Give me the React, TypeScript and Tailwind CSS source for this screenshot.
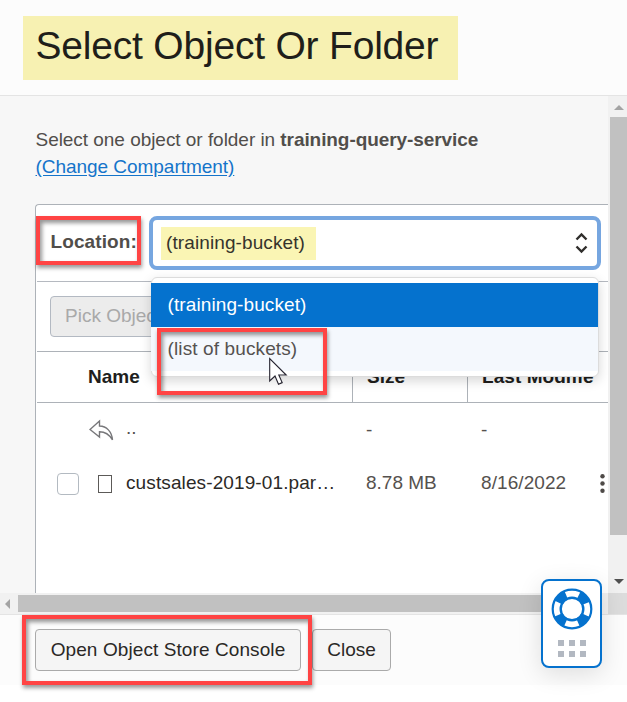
import React from "react";

function Callout({ className }: { className: string }) {
  return (
    <div
      className={`pointer-events-none absolute border-4 border-[#ff4444] ${className}`}
    >
      <div className="h-full w-full shadow-[inset_2px_3px_4px_rgba(0,0,0,0.42)]" />
    </div>
  );
}

function Header() {
  return (
    <header className="h-24 border-b border-[#e4e4e4] bg-[#fcfcfc] pl-[23px] pt-4">
      <h1 className="h-16 w-[435px] whitespace-nowrap bg-[#f7f1b2] pl-[12.5px] text-[39px] leading-[59px] tracking-[-0.2px] text-[#201e1a]">
        Select Object Or Folder
      </h1>
    </header>
  );
}

function LocationSelect() {
  return (
    <div className="relative ml-[11.5px] w-[452px]">
      <div className="flex h-[54px] items-center justify-between rounded-lg border-4 border-[#76a6e0] bg-white pl-[8.5px] pr-[9px]">
        <span className="h-[33px] w-[155px] bg-[#faf5b4] pl-[5px] leading-[32px] tracking-[0.1px] text-[#35332c]">
          (training-bucket)
        </span>
        <svg width="13" height="22" viewBox="0 0 13 22" fill="none" stroke="#302e2c" strokeWidth="2.4">
          <path d="M1.5 7.5 6.5 2.5 11.5 7.5M1.5 14.5 6.5 19.5 11.5 14.5" />
        </svg>
      </div>
      <div className="absolute left-[2.5px] top-[61px] z-10 w-[448px] rounded-md border border-[#dcdcdc] bg-white py-[5px] shadow-[0_4px_12px_rgba(0,0,0,0.16)]">
        <div className="-ml-px h-11 bg-[#0572ce] pl-[16.5px] leading-[43px] tracking-[0.1px] text-white">(training-bucket)</div>
        <div className="-ml-px h-11 bg-[#f4f8fd] pl-[16.5px] leading-[43px] tracking-[0.12px] text-[#555250]">(list of buckets)</div>
      </div>
    </div>
  );
}

function ObjectTable() {
  return (
    <div className="ml-px">
      <div className="grid h-[52px] grid-cols-[315px_115px_141px] border-y border-[#adb2b8] font-bold leading-[49px] text-[#201e1c]">
        <span className="pl-[51px]">Name</span>
        <span className="border-l border-[#adb2b8] pl-[14px]">Size</span>
        <span className="overflow-hidden whitespace-nowrap border-l border-[#adb2b8] pl-[14px] tracking-[0.06px]">Last Modifie</span>
      </div>
      <div className="grid h-[54px] grid-cols-[315px_115px_141px] items-center text-[#55514e]">
        <div className="flex items-center pl-[52px]">
          <svg width="25" height="23" viewBox="0 0 25 23" fill="none" stroke="#77777a" strokeWidth="1.4">
            <path d="M10.5 2 1 10.5 10.5 18V12.7C16.5 12.7 20 15 23.5 20.8 22.8 12.5 17.5 7.2 10.5 7Z" />
          </svg>
          <span className="mb-1 ml-[12px]">..</span>
        </div>
        <span className="pl-[14px]">-</span>
        <span className="pl-[14px]">-</span>
      </div>
      <div className="grid h-[54px] grid-cols-[315px_115px_141px] items-center text-[#55514e]">
        <div className="flex items-center pl-5">
          <span className="h-[22px] w-[22px] shrink-0 rounded border border-[#b3bac1]" />
          <span className="ml-[19px] h-[18px] w-[14px] shrink-0 border border-[#5c5a58]" />
          <span className="mb-[2px] ml-[14px] whitespace-nowrap tracking-[0.11px] text-[#2b2926]">
            custsales-2019-01.par…
          </span>
        </div>
        <span className="mb-[2px] pl-[14px]">8.78 MB</span>
        <div className="flex items-center justify-between pl-[14px] pr-[3px]">
          <span className="mb-[2px] tracking-[0.08px]">8/16/2022</span>
          <svg width="5" height="20" viewBox="0 0 5 20" fill="#4e4a47">
            <circle cx="2.5" cy="2.2" r="2.2" />
            <circle cx="2.5" cy="9.5" r="2.2" />
            <circle cx="2.5" cy="16.8" r="2.2" />
          </svg>
        </div>
      </div>
    </div>
  );
}

function Browser() {
  return (
    <section className="mt-6 h-[389px] rounded-tl border-l border-t border-[#adb2b8] bg-white">
      <div className="ml-px flex h-[77px] items-start border-b border-[#b5b9c0] pt-[11px]">
        <label className="w-[100px] pl-[13.5px] pt-[13px] font-bold leading-[26px] tracking-[0.1px] text-[#514e4a]">
          Location:
        </label>
        <LocationSelect />
      </div>
      <div className="flex h-[69px] items-start pl-[14px] pt-[14px]">
        <button className="h-[41px] w-40 rounded border border-[#b3b9c2] bg-[#ececec] pl-[14px] text-left text-[#a9a9a9]">
          Pick Objects
        </button>
      </div>
      <ObjectTable />
    </section>
  );
}

function VerticalScrollbar() {
  return (
    <div className="flex w-[19px] shrink-0 flex-col bg-[#f1f1f1] pl-[2px]">
      <div className="flex h-[21px] items-end justify-center pb-[7px]">
        <svg width="10" height="5"><path d="M0 5 5 0 10 5Z" fill="#a3a3a3" /></svg>
      </div>
      <div className="h-[418px] bg-[#c1c1c1]" />
      <div className="flex h-[58px] items-end justify-center pb-[9px]">
        <svg width="10" height="5"><path d="M0 0 5 5 10 0Z" fill="#505050" /></svg>
      </div>
    </div>
  );
}

function HorizontalScrollbar() {
  return (
    <div className="flex h-[21px] border-t-2 border-[#f1f1f1] bg-[#f1f1f1]">
      <div className="flex w-[18px] items-center pb-[2px] pl-[5px]">
        <svg width="5" height="10"><path d="M5 0 0 5 5 10Z" fill="#a3a3a3" /></svg>
      </div>
      <div className="h-[17px] w-[560px] bg-[#c1c1c1]" />
      <div className="flex-1" />
      <div className="-mt-[2px] h-[21px] w-[19px] bg-[#dcdcdc]" />
    </div>
  );
}

function HelpWidget() {
  return (
    <div className="absolute left-[541px] top-[579px] z-20 flex h-[89px] w-[61px] flex-col items-center rounded-lg border-2 border-[#0572ce] bg-white pt-[7px] shadow-[0_6px_24px_rgba(0,0,0,0.12)]">
      <svg width="42" height="42" viewBox="0 0 42 42" fill="none">
        <circle cx="21" cy="21" r="15" stroke="#0572ce" strokeWidth="9" strokeDasharray="10.8 12.762" strokeDashoffset="-6.38" />
        <circle cx="21" cy="21" r="19.3" stroke="#0572ce" strokeWidth="2.2" />
        <circle cx="21" cy="21" r="11.3" stroke="#0572ce" strokeWidth="2.4" />
      </svg>
      <div className="mt-[10px] grid grid-cols-3 gap-x-[5px] gap-y-[5px]">
        {[0, 1, 2, 3, 4, 5].map((i) => (
          <span key={i} className="h-[6px] w-[6px] bg-[#b2b8c1]" />
        ))}
      </div>
    </div>
  );
}

export default function App() {
  return (
    <div className="relative h-[702px] w-[627px] overflow-hidden bg-white font-['Liberation_Sans',Arial,sans-serif] text-[19px]">
      <Header />
      <div className="flex h-[497px] bg-[#f7f7f7]">
        <main className="w-[608px] overflow-hidden pl-[35px] pt-[30px]">
          <p className="whitespace-nowrap pl-[0.5px] leading-[27px] tracking-[-0.04px] text-[#514e4b]">
            Select one object or folder in <b className="tracking-[-0.08px]">training-query-service</b>
            <br />
            <a className="text-[#1474ca] underline underline-offset-2">(Change Compartment)</a>
          </p>
          <Browser />
        </main>
        <VerticalScrollbar />
      </div>
      <HorizontalScrollbar />
      <footer className="flex h-[71px] gap-[11px] border-t border-[#e4e4e4] bg-[#fcfcfc] pl-[35px] pt-[14px] text-[#2a2826]">
        <button className="h-[42px] w-[266px] whitespace-nowrap rounded border border-[#aaaaaa] bg-[#f5f5f5] tracking-[0.09px]">
          Open Object Store Console
        </button>
        <button className="h-[42px] w-[79px] rounded border border-[#aaaaaa] bg-[#f5f5f5]">Close</button>
      </footer>
      <Callout className="left-[36px] top-[216px] z-20 h-[49px] w-[105px] shadow-[1px_3px_4px_rgba(0,0,0,0.4)]" />
      <Callout className="left-[157px] top-[328px] z-20 h-[67px] w-[170px] shadow-[1px_3px_4px_rgba(0,0,0,0.4)]" />
      <Callout className="left-[22px] top-[615px] z-20 h-[70px] w-[290px] shadow-[1px_3px_4px_rgba(0,0,0,0.4)]" />
      <HelpWidget />
      <svg className="absolute left-[269px] top-[357px] z-30" width="19" height="29" viewBox="0 0 19 29">
        <path d="M.7 1.5V24L6 19 9.5 27.2 13.2 25.6 9.8 18H17.2Z" fill="white" stroke="#24222e" strokeWidth="1.1" />
      </svg>
    </div>
  );
}
